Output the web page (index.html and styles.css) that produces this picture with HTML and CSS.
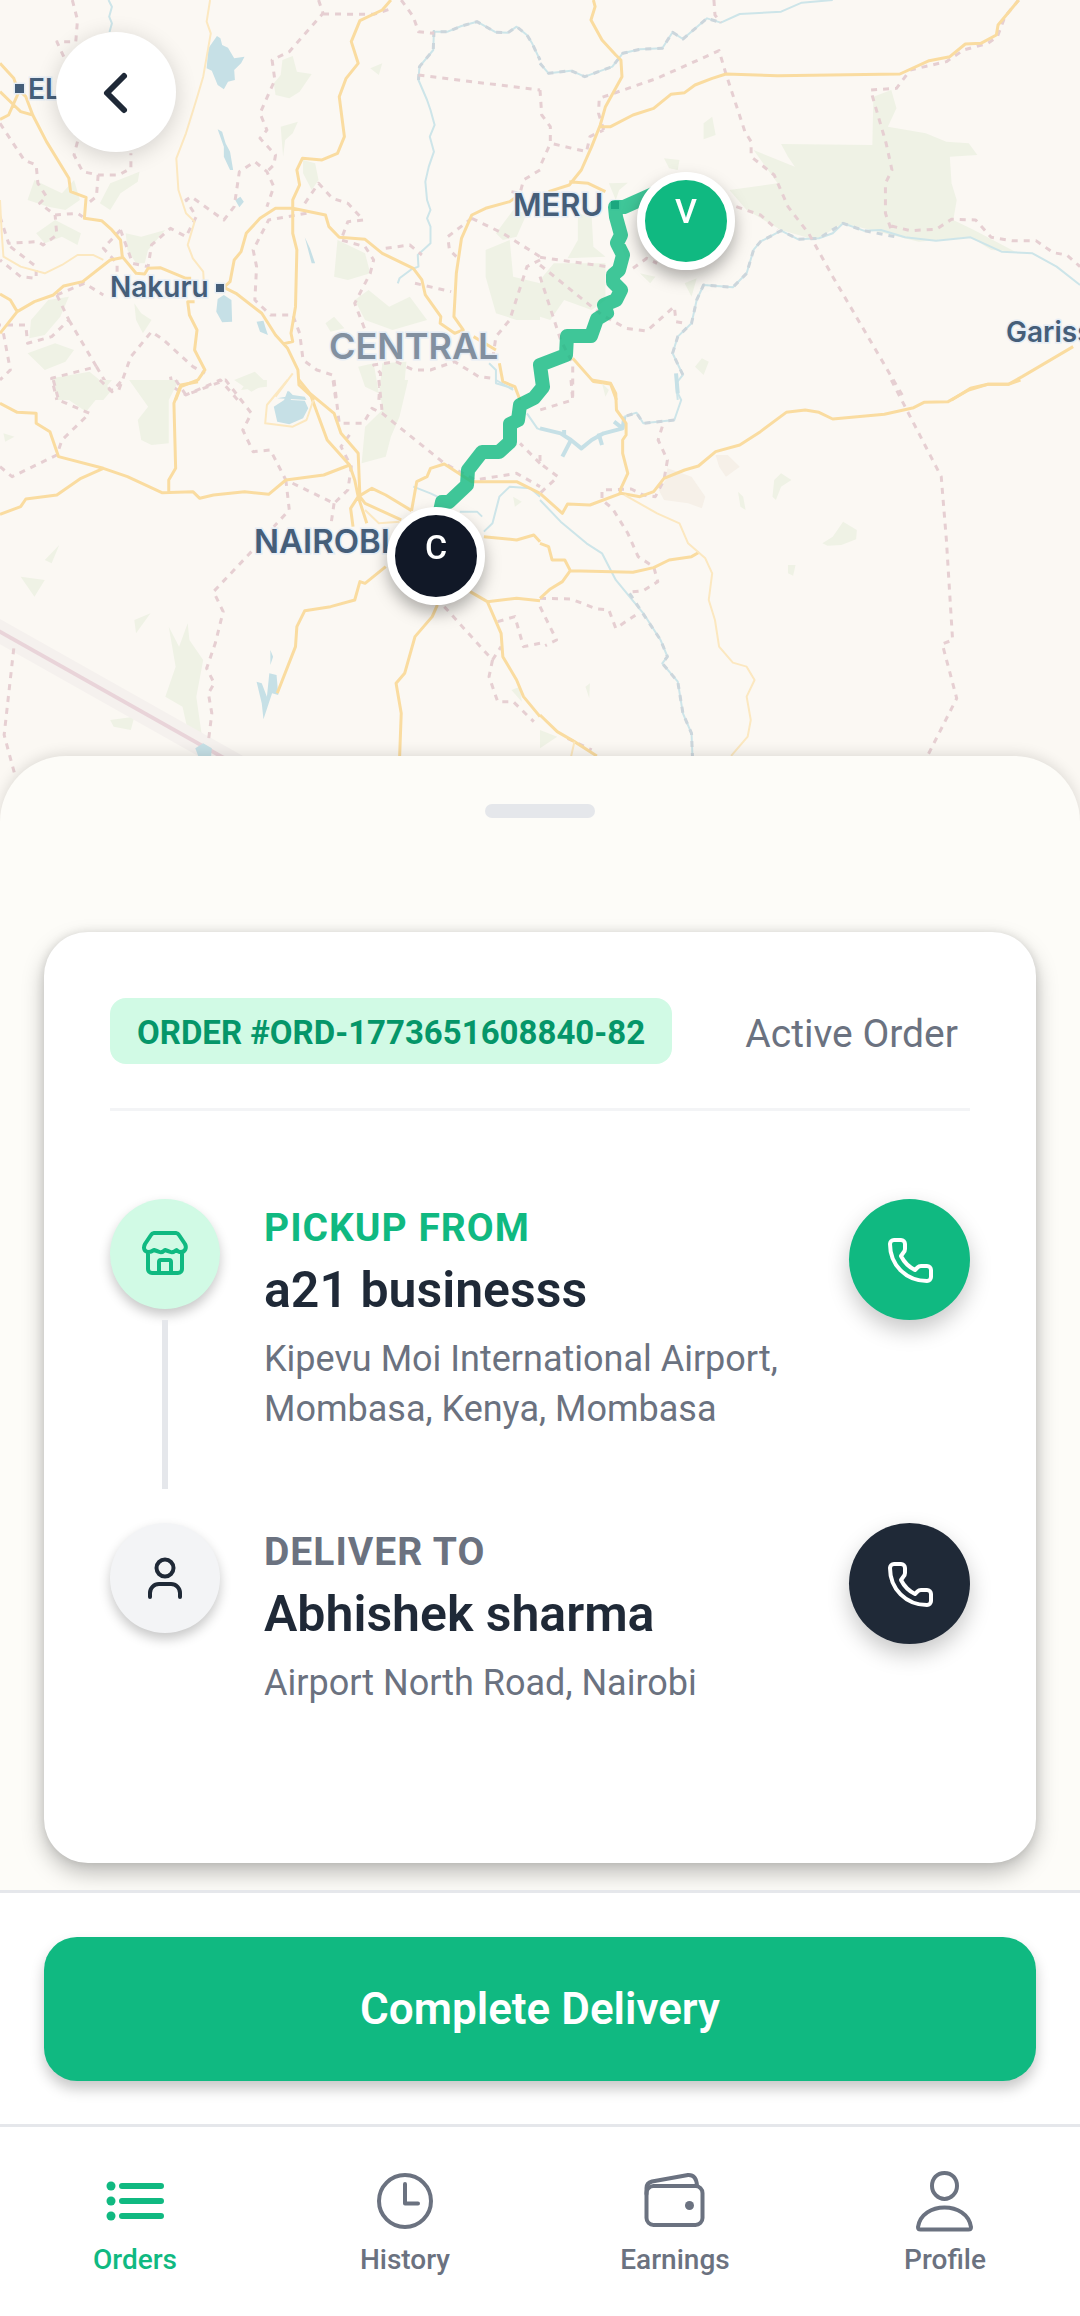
FILE: index.html
```html
<!DOCTYPE html>
<html lang="en">
<head>
<meta charset="utf-8">
<meta name="viewport" content="width=device-width, initial-scale=1">
<title>Active Order</title>
<link rel="stylesheet" href="styles.css">
</head>
<body>
<div class="screen">
  <header class="map">
    <svg class="map-canvas" viewBox="0 0 1080 822" preserveAspectRatio="xMidYMin slice" role="img" aria-label="Delivery route map">
      <!-- north-west tile -->
      <g transform="scale(.3444 .3333)">
        <path class="park" d="M820 180L850 168L862 215L905 222L870 275L840 295L800 285L795 250L815 225ZM815 380L865 365L850 400L828 420L822 470ZM80 600L100 540L140 560L180 580L215 540L232 600L190 630L140 620ZM290 610L320 550L405 515L400 545L350 580L320 630ZM365 700L410 710L480 690L430 750L420 790L395 790L370 750ZM105 700L160 660L235 700L225 735L180 710L130 730ZM140 900L200 890L175 950L130 1005L85 1015L90 960ZM80 1060L160 1030L215 1050L190 1085L130 1110ZM150 1135L260 1115L325 1170L300 1200H165ZM980 720L1060 760L1075 820L1010 840L970 830ZM1030 900L1070 870L1130 920L1190 890L1240 960L1140 990L1060 960ZM1410 750L1480 720L1490 830L1568 850V960H1500L1440 940L1410 830ZM1440 700L1490 630L1530 640L1500 710L1460 720ZM1110 1090L1180 1085L1170 1200H1100ZM680 1140L740 1115L775 1150L730 1175ZM880 480L915 490L925 540L905 570L880 520ZM1040 1100L1085 1090L1100 1180L1060 1160ZM945 970L970 950L1000 985L960 995ZM390 910L410 940L440 960L415 1000L395 960ZM1075 205L1110 190L1100 225Z"/>
        <path class="river" d="M315 0L325 20L317 50L325 70L318 96M1155 850L1160 835L1195 808L1215 800L1213 765L1250 730L1250 680L1240 655L1250 630L1240 600L1235 545L1245 500L1260 455L1248 410L1262 375L1250 330L1240 300L1215 240L1218 200L1258 150L1260 90M1260 95L1300 95L1340 78L1385 65L1440 97L1475 98L1500 80L1530 105L1545 130L1568 180M1420 1090L1440 1110L1440 1150L1490 1165"/>
        <path class="county water-edge" d="M1215 240L1218 200L1258 150L1260 95L1300 95L1340 78L1385 65L1440 97L1475 98L1500 80L1530 105L1545 130L1568 180"/>
        <path class="lake" d="M630 108L640 115L645 135L662 143L680 175L710 170L700 190L680 210L682 240L662 245L650 268L632 255L615 212L600 205L605 145ZM632 388L645 395L655 430L668 455L677 510L668 510L650 470V440ZM683 600L698 590L708 605L695 622ZM885 712L900 745L915 790L905 790ZM650 885L672 900L674 965L645 967L628 935L632 897ZM745 965L765 962L770 980L778 1005L755 995ZM805 1195L830 1190L838 1172L850 1185L885 1190L890 1200Z"/>
        <path class="county" d="M210 0L225 60L220 125H165L185 170M0 370L70 480L105 495L110 550L135 590L115 610L160 645L225 640L240 650M225 425L215 465L240 515L285 525H345L380 505V460M285 525L280 590L255 610M0 650L25 730L110 725L125 735L165 705L160 645M30 740L105 800V835L60 830L0 780M350 690L300 745L340 790V820M350 690L385 790L430 800L440 735L495 685L540 710L570 650L540 600L555 590L650 660L680 620L695 515L740 485L775 515L795 560L775 620M925 0L938 40L840 155L790 180L798 240L755 340L775 390L755 415L800 465L795 495L775 515M938 42L1085 43L1140 25M1165 0L1200 50L1215 95L1260 100M890 640L780 660L735 750L745 800L740 900L785 945L850 945L870 1000L880 1080L920 1110L965 1125L975 1200M885 610L925 550L965 595L1010 610L1055 660L1010 665L990 720L1060 740L1085 780L1075 820L1030 910L1060 990M1120 745L1190 735L1225 765M1205 850L1310 875M1215 225L1330 240L1568 270M1568 510L1520 540L1510 580L1485 575M1370 655L1300 710L1305 750L1325 770M1370 655L1460 700L1568 770M1568 780L1530 800L1480 960L1440 1010L1430 1080M165 885L200 960L150 1010L80 1030L75 975H0M200 960L280 1100L150 1135L165 1200M280 1100L320 1170H345L380 1070L440 995L475 1020L560 1100L595 1120M10 1000L30 1110L0 1140M495 1130L500 1160L540 1185L640 1140L690 1200M1100 1200L1105 1120L1085 1095L1150 1085L1200 1110H1250L1320 1085L1390 1130L1430 1135M165 885L245 850L300 885"/>
        <path class="road" d="M0 190L40 235L50 265L75 290L95 345L135 425L200 535L205 575L250 592L245 655L295 662L325 690L350 720L355 770L395 820L420 822L430 805L465 803L540 835H555M0 275L40 315L60 335L95 345M0 358L25 345L55 275M0 1000L50 935L100 905L155 885L185 858L240 845L320 780L360 772M0 882L30 900L50 935M650 862L668 845L680 780L700 755L715 700L755 655L800 625L850 625L945 645L955 680L985 712L1060 718L1110 760L1200 805L1225 840L1235 885L1280 950L1278 970L1320 1000L1345 990L1318 950L1325 820L1340 715L1370 645L1410 625L1480 605L1500 590M820 1032L850 1025L845 1000L858 920L862 750L850 700V600L870 555L862 510L878 475L935 480L980 460L1000 410L990 330L985 290L1005 235L1040 190L1020 125L1045 62L1110 30L1135 0M650 862L685 880L760 940L800 1005L835 1045L865 1110L868 1155L905 1190L912 1200M565 905H545L550 945L572 990L565 1050L595 1110L575 1140L525 1160L510 1200M1375 1010L1440 1050M1450 1090L1460 1145L1495 1160L1510 1200"/>
        <path class="road minor" d="M0 600L5 700L10 770L60 800L130 820L180 795L225 765H270L300 780M610 0L600 65L612 100L590 230L570 300L540 400L512 475L518 570L540 640L565 665L545 735L560 775L590 815L592 850M800 1190L850 1120"/>
      </g>
      <!-- north-east tile -->
      <g transform="translate(540 0) scale(.3444 .3333)">
        <path class="park" d="M700 432L965 435L968 290L1020 270L1035 325L1010 380L1120 400L1180 425L1245 430L1270 465L1190 470L1195 550L1210 600L1200 660L1260 690L1380 755L1310 750L1250 710L1100 725L1000 700L880 670L800 720L700 690L600 630L550 570L690 550L620 450L740 500L720 470ZM475 370L500 350L510 405L475 418ZM360 475L405 480L400 510L375 505ZM110 640L150 650L155 740L190 770L80 775L110 720ZM40 790H190V900L150 930L70 900L30 960L0 950V840ZM450 1100L470 1075L490 1085L475 1125ZM200 550L255 548L230 570L220 600ZM290 820L335 830L320 850ZM420 850L455 835L440 890Z"/>
        <path class="river" d="M0 190L25 220L90 212L130 230L210 200L240 160L290 148L355 145L385 97L415 117L485 55L525 68L580 42L700 35L760 8L850 0M400 1200L395 1150L415 1125L385 1060L400 1010L440 970L455 900L475 855L560 862L600 820L620 750L640 725L700 692L750 718L810 715L850 700L880 670L940 692L990 690L1060 712L1150 722L1250 712L1340 755L1430 760L1500 800L1568 855"/>
        <path class="county water-edge" d="M0 190L25 220L90 212L130 230L210 200L240 160L290 148L355 145L385 97L415 117L485 55L525 68M415 1125L385 1060L400 1010L440 970L455 900L475 855L560 862L600 820L620 750L640 725L700 692L750 718L810 715L880 670L940 692L1030 710"/>
        <path class="county" d="M505 0L508 45L525 68M1390 0L1350 50L1328 110L1300 130L1230 150L1180 185L1075 210L1035 265L960 270L1005 430L1022 510L1003 550V640L1020 690M1020 678L1075 692L1150 688L1195 658L1265 660L1310 712L1370 722H1440L1490 758L1530 765L1568 800M185 390L170 340L172 295L340 235L520 152L540 222L595 395L613 425V470L680 525L720 620L780 700L850 830L1060 1200M0 270L5 345L30 380V430L0 500M40 432L135 455L145 410L185 390M570 620L640 645L690 690M0 772L195 800M0 795L180 945L250 985L310 993L390 920L395 965L420 970M0 830L60 1020L95 1090V1200M270 805L310 775L340 790"/>
        <path class="road" d="M155 0L160 20L148 60L180 120L220 165L235 180L238 230L190 320L175 375L150 440L120 510L85 555L25 575M85 545L140 550L190 575M175 380H205L270 345L330 325L380 283L420 278L450 255L500 235L540 222L690 227L1045 222L1130 182L1190 170L1235 132L1280 130L1325 105L1330 75L1390 0M1195 1200L1250 1165L1300 1153H1360L1400 1130L1548 1040M95 1075L155 1145L205 1152L222 1200"/>
      </g>
      <!-- south-west tile -->
      <g transform="translate(0 380) scale(.3444 .3333)">
        <path class="park" d="M170 0H325L250 95L200 60ZM375 0H520L490 60V190L440 195L410 180L400 120L430 80ZM1050 250L1060 140L1110 90L1100 0H1185L1160 110L1135 170L1120 230ZM60 590L130 600L100 650ZM490 740L520 800L545 730L550 780L590 840L570 950L585 1060L545 1050L530 980L480 950L510 860ZM320 1020L390 1010L380 1050L330 1040ZM130 540L172 495L150 550ZM390 720L437 700L395 760ZM10 160L42 170L15 185ZM720 0H775V20L700 30ZM1490 350L1515 365L1495 380ZM1485 930L1510 920L1515 965Z"/>
        <path class="frontier-glow" d="M-40 732L690 1157"/>
        <path class="frontier" d="M-40 732L690 1157"/>
        <path class="river" d="M1200 320L1250 340L1270 350M1335 395L1385 395L1400 410M1405 455L1430 430L1450 350L1480 320L1540 325L1568 350M1440 0L1490 30M1530 100L1560 145L1568 148"/>
        <path class="lake" d="M795 80L825 60L835 32L845 60L885 62L895 85L880 115L840 133L805 125ZM785 810L793 830L785 855ZM782 880L803 885L808 945L790 940L765 1018L760 970L745 905L760 910L775 950ZM567 1105L590 1090L615 1105L612 1140H580Z"/>
        <path class="county" d="M0 260L35 290L165 225L180 180L260 100L170 60L155 0M290 0L325 35L355 0M510 0L540 45L655 0L730 100L705 150L735 215L785 210L830 300L970 370L1010 330L1020 260L990 200L1025 150M830 300L840 390L795 440M730 515L620 635L648 695L625 790L600 865L622 910L605 940L615 1000L605 1085M40 805L12 1065L42 1180M970 0L985 130H1055L1080 85L1110 100L1290 250L1380 300L1500 280L1568 320M1100 0L1110 100M970 370L960 440M1290 680L1430 840L1420 890L1445 965H1490L1550 1025M1430 840L1455 800M1445 725L1495 710L1520 800L1568 790M1568 250L1510 190"/>
        <path class="road" d="M0 70L50 97L105 100V130L145 155L170 230L300 265L370 290L470 338L560 335L580 355L620 345L710 335L780 343L830 300L940 285L1015 255M0 403L60 380L75 357L165 345L235 295L300 265M575 5L525 15L505 70L510 265L490 300V335M868 0L900 40L950 180L1015 255L1030 300L1040 350L1065 430M900 40L970 100L990 160L1040 220L1045 350M1040 350L1080 325L1120 345L1195 392M1045 350L1060 370L1165 420M1040 350L1018 385L1025 440M1195 392L1210 305L1240 290L1250 265L1290 252L1370 305H1500L1568 340M1120 560L1060 610L1045 605L1030 660L960 680L885 692L862 740L858 800L805 940M1270 675L1255 710L1205 770L1175 880L1150 910L1165 1000L1160 1140M1365 635L1415 665L1455 760L1460 830L1500 900L1520 950L1568 1010M1415 665L1500 655L1568 662M1405 470L1500 480L1550 465L1568 485"/>
        <path class="road minor" d="M835 0L775 75L770 130L850 140L890 120L910 60M1060 390L1100 430L1160 425"/>
      </g>
      <!-- south-east tile -->
      <g transform="translate(540 380) scale(.3444 .3333)">
        <path class="town" d="M370 265L400 275L440 290L480 350L470 385L430 370L360 360L345 330L365 300ZM510 225H545L580 260L540 290L520 260Z"/>
        <path class="park" d="M680 300L700 280L730 300L700 320L685 360L675 350ZM575 335L590 350L597 390L582 380ZM820 490L850 470L880 425L920 450L918 478L875 495L835 497ZM720 555H742L735 587L720 580ZM132 920L145 910L143 955ZM0 1050L50 1070L0 1105ZM180 10L200 30L190 50Z"/>
        <path class="river" d="M395 0L400 40L410 60L390 120L300 130L280 98L245 110M0 360L60 425L135 490L180 520L220 600L300 700L350 780L370 830L355 850L400 905L415 1000L440 1060L443 1140"/>
        <path class="river wide" d="M395 -20L400 40M245 110L240 145L185 160L150 180L120 205L90 180L60 160L0 145M90 180L65 230M240 145L215 125M70 165V150M170 160L180 195"/>
        <path class="county water-edge" d="M390 120L300 130L280 98L245 110M260 640L350 780L370 830L355 850L400 905L415 1000L440 1060L443 1140"/>
        <path class="county" d="M1020 0L1165 290L1180 480L1198 780L1168 792L1210 955L1125 1128M90 0L95 60L0 90M0 225V250L52 290L0 340M355 140L343 180L370 240L360 300L335 350L300 345L265 327L180 330V360L210 385L255 460L285 530L330 560L342 605L300 632L255 637M0 655L90 657L165 687L200 690L220 745L285 700M0 680L48 780L15 797M80 1075L150 1110"/>
        <path class="road" d="M150 0L205 10L220 40L222 90L250 130V165L240 180V220L255 280L235 325L232 340M0 340L65 400L80 372L145 375L235 340L290 350L330 335L360 295L420 270L460 258L510 215L580 195L640 155L715 97L770 90L810 97L850 117L1000 103L1085 83L1115 67L1185 65L1245 30L1300 13H1360L1395 0M0 490L25 500L35 540L72 540L88 572L270 577L330 563L375 540L440 530L462 517M88 572L65 605L30 627L0 655M0 1005L50 1055L100 1085L165 1128"/>
        <path class="road minor" d="M245 345L340 400L405 430L430 490L480 535L500 580L490 660L508 720L520 800L560 848L600 860L623 900L600 950L612 1020L603 1070L555 1128M100 1085L88 1140"/>
      </g>
      <g class="place">
        <path d="M15 84h9v9h-9zM216 284h8v8h-8zM611 201h8v8h-8z"/>
        <text x="28" y="99">ELDORET</text>
        <text x="110" y="297">Nakuru</text>
        <text class="city" x="513" y="216">MERU</text>
        <text x="1006" y="342">Garissa</text>
        <text class="capital" x="254" y="553">NAIROBI</text>
        <text class="region" x="329" y="359">CENTRAL</text>
      </g>
      <path class="route" d="M660 191L624 207L615 207L616 217L621 235L617 243L623 255L619 270L613 275V282L621 290L616 300L604 305L607 313L597 319L591 336H567L566 355L540 365L543 387L534 398L520 405L518 420L510 424V442L499 452H482L468 470L467 485L449 502H442L436 530"/>
      <g class="pin vendor">
        <circle cx="686" cy="221" r="45"/>
        <text x="686" y="223">V</text>
      </g>
      <g class="pin customer">
        <circle cx="436" cy="556" r="45"/>
        <text x="436" y="559">C</text>
      </g>
    </svg>
    <button class="back" type="button" aria-label="Back">
      <svg class="icon" viewBox="0 0 56 56"><path d="M36 12L19 29L36 46"/></svg>
    </button>
  </header>

  <main class="sheet">
    <div class="handle"></div>
    <article class="card">
      <div class="card-head">
        <span class="badge">ORDER #ORD-1773651608840-82</span>
        <span class="status">Active Order</span>
      </div>
      <section class="stop pickup">
        <div class="rail">
          <span class="disc">
            <svg class="icon" viewBox="0 0 56 56"><path d="M17 7H39a4 4 0 0 1 3 2L48 18C50 22 48 26 44 26Q41 26 39.500 24Q36 27 33.500 26T28 24Q25 27 22.500 26T17 24Q14 26 12 26C7 26 6 22 8 18L14 9a4 4 0 0 1 3-2ZM11 26V43a4 4 0 0 0 4 4H41a4 4 0 0 0 4-4V26M22 47V36a2 2 0 0 1 2-2H32a2 2 0 0 1 2 2V47"/></svg>
          </span>
          <span class="line"></span>
        </div>
        <div class="details">
          <h2 class="kind">PICKUP FROM</h2>
          <p class="name">a21 businesss</p>
          <p class="address">Kipevu Moi International Airport, Mombasa, Kenya, Mombasa</p>
        </div>
        <button class="call" type="button" aria-label="Call a21 businesss">
          <svg class="icon" viewBox="0 0 56 56"><path d="M12 8H19a4 4 0 0 1 4 4V17a5 5 0 0 1-1.500 3.500L19 24C22 30 27 35 33 38L35.500 35.500A5 5 0 0 1 39 34H45a4 4 0 0 1 4 4V45a4 4 0 0 1-4 4C24 49 8 33 8 12a4 4 0 0 1 4-4Z"/></svg>
        </button>
      </section>
      <section class="stop dropoff">
        <div class="rail">
          <span class="disc">
            <svg class="icon" viewBox="0 0 56 56"><circle cx="28" cy="18" r="8.500"/><path d="M13 47V43a9 9 0 0 1 9-9H34a9 9 0 0 1 9 9V47"/></svg>
          </span>
        </div>
        <div class="details">
          <h2 class="kind">DELIVER TO</h2>
          <p class="name">Abhishek sharma</p>
          <p class="address">Airport North Road, Nairobi</p>
        </div>
        <button class="call" type="button" aria-label="Call Abhishek sharma">
          <svg class="icon" viewBox="0 0 56 56"><path d="M12 8H19a4 4 0 0 1 4 4V17a5 5 0 0 1-1.500 3.500L19 24C22 30 27 35 33 38L35.500 35.500A5 5 0 0 1 39 34H45a4 4 0 0 1 4 4V45a4 4 0 0 1-4 4C24 49 8 33 8 12a4 4 0 0 1 4-4Z"/></svg>
        </button>
      </section>
    </article>
  </main>

  <div class="actions">
    <button class="complete" type="button">Complete Delivery</button>
  </div>

  <nav class="tabs">
    <a class="tab active" href="#orders">
      <svg class="tab-icon" viewBox="0 0 66 66"><path class="bars" d="M20 18H59M20 33H59M20 48H59"/><g class="dots"><circle cx="9" cy="18" r="4.500"/><circle cx="9" cy="33" r="4.500"/><circle cx="9" cy="48" r="4.500"/></g></svg>
      Orders
    </a>
    <a class="tab" href="#history">
      <svg class="tab-icon" viewBox="0 0 66 66"><circle cx="33" cy="33" r="26"/><path d="M33 16V35.500H46"/></svg>
      History
    </a>
    <a class="tab" href="#earnings">
      <svg class="tab-icon" viewBox="0 0 66 66"><rect x="4.500" y="18" width="56" height="39" rx="7"/><path d="M4.500 26V20Q4.500 15 10 13.500L46 7Q54.500 6.500 55 18"/><g class="dots"><circle cx="47.500" cy="37.500" r="4.500"/></g></svg>
      Earnings
    </a>
    <a class="tab" href="#profile">
      <svg class="tab-icon" viewBox="0 0 66 66"><path d="M32.500 5C40 5 45 10.500 45 18C45 25 39 31 32.500 31S20 25 20 18C20 10.500 25 5 32.500 5ZM6 59C8 46 20 39.500 32.500 39.500S57 46 59 59Q59 61.500 56.500 61.500H8.500Q6 61.500 6 59Z"/></svg>
      Profile
    </a>
  </nav>
</div>
</body>
</html>
```
FILE: styles.css
```css
* {
  box-sizing: border-box;
}

body {
  margin: 0;
  background: #fdfcf8;
  color: #1f2937;
  font-family: Roboto, "Liberation Sans", sans-serif;
}

button {
  padding: 0;
  border: 0;
  font: inherit;
  cursor: pointer;
}

h2,
p {
  margin: 0;
}

.screen {
  display: flex;
  flex-direction: column;
  min-height: 100vh;
}

/* Map */

.map {
  position: relative;
  flex: 1 0 600px;
  overflow: hidden;
  background: #fbf8f3;
}

.map-canvas {
  position: absolute;
  inset: 0;
  width: 100%;
  height: 100%;
}

.map-canvas path {
  fill: none;
  stroke-linejoin: round;
  vector-effect: non-scaling-stroke;
}

.map-canvas .park {
  fill: #eff2e5;
}

.map-canvas .town {
  fill: #f6f0e8;
}

.map-canvas .lake {
  fill: #c6e0e6;
}

.map-canvas .river {
  stroke: #cde5e9;
  stroke-width: 2px;
}

.map-canvas .wide {
  stroke: #c6e0e6;
  stroke-width: 4px;
}

.map-canvas .county {
  stroke: #e6cfd2;
  stroke-width: 3px;
  stroke-dasharray: 6 6;
}

.map-canvas .water-edge {
  stroke: #ccd6dc;
}

.map-canvas .frontier-glow {
  stroke: #f5f1ee;
  stroke-width: 22px;
}

.map-canvas .frontier {
  stroke: #e9d4d9;
  stroke-width: 4px;
}

.map-canvas .road {
  stroke: #fadca0;
  stroke-width: 3px;
}

.map-canvas .minor {
  stroke: #fce8c0;
  stroke-width: 2px;
}

.map-canvas .route {
  stroke: rgba(16, 185, 129, 0.8);
  stroke-width: 14px;
  stroke-linecap: round;
}

.place {
  fill: #455e79;
  stroke: #e6edf5;
  stroke-width: 3px;
  paint-order: stroke;
  font-family: Inter, "Liberation Sans", sans-serif;
  font-size: 28px;
  font-weight: 600;
}

.map-canvas .place path {
  fill: #455e79;
}

.city {
  font-size: 31px;
}

.capital {
  font-size: 33px;
}

.region {
  fill: #8290a0;
  font-size: 36px;
}

.pin {
  filter: drop-shadow(0 8px 8px rgba(0, 0, 0, 0.3));
}

.pin circle {
  stroke: #fff;
  stroke-width: 8px;
}

.pin text {
  fill: #fff;
  font-size: 34px;
  font-weight: 500;
  text-anchor: middle;
}

.vendor circle {
  fill: #10b981;
}

.customer circle {
  fill: #111827;
}

.icon {
  width: 56px;
  height: 56px;
  fill: none;
  stroke: currentColor;
  stroke-width: 4px;
  stroke-linecap: round;
  stroke-linejoin: round;
}

.back {
  position: absolute;
  top: 32px;
  left: 56px;
  display: grid;
  place-items: center;
  width: 120px;
  height: 120px;
  border-radius: 50%;
  background: #fff;
  color: #1f2937;
  box-shadow: 0 4px 22px rgba(0, 0, 0, 0.16);
}

.back .icon {
  stroke-width: 6px;
}

/* Order sheet */

.sheet {
  position: relative;
  margin-top: -66px;
  padding: 48px 44px 27px;
  border-radius: 66px 66px 0 0;
  background: #fdfcf8;
  box-shadow: 0 -2px 14px rgba(0, 0, 0, 0.12);
}

.handle {
  width: 110px;
  height: 14px;
  margin: 0 auto 114px;
  border-radius: 7px;
  background: #e5e7eb;
}

.card {
  padding: 66px;
  border-radius: 44px;
  background: #fff;
  box-shadow: 0 10px 22px rgba(0, 0, 0, 0.26), 0 0 10px rgba(0, 0, 0, 0.1);
}

.card-head {
  display: flex;
  align-items: center;
  justify-content: space-between;
  gap: 16px;
  margin-bottom: 88px;
  padding-bottom: 44px;
  border-bottom: 3px solid #f3f4f6;
}

.badge {
  padding: 3px 27px 0;
  border-radius: 16px;
  background: #d1fae5;
  color: #059669;
  font-size: 33px;
  font-weight: 700;
  line-height: 63px;
}

.status {
  margin-right: 12px;
  padding-top: 6px;
  color: #6b7280;
  font-size: 39px;
}

.stop {
  display: flex;
  align-items: flex-start;
  margin-bottom: 34px;
}

.rail {
  display: flex;
  flex: none;
  flex-direction: column;
  align-items: center;
  align-self: stretch;
  margin-right: 44px;
}

.disc {
  display: grid;
  place-items: center;
  width: 110px;
  height: 110px;
  border-radius: 50%;
  background: #f3f4f6;
  color: #1f2937;
  box-shadow: 0 6px 12px rgba(0, 0, 0, 0.22);
}

.pickup .disc {
  background: #d1fae5;
  color: #10b981;
}

.line {
  flex: 1;
  width: 6px;
  margin-top: 11px;
  background: #e5e7eb;
}

.details {
  flex: 1;
  min-width: 0;
  padding: 7px 33px 55px 0;
}

.kind {
  color: #6b7280;
  font-size: 39px;
  font-weight: 700;
  letter-spacing: 1px;
  line-height: 44px;
}

.pickup .kind {
  color: #10b981;
}

.name {
  margin: 10px 0 14px;
  font-size: 50px;
  font-weight: 600;
  line-height: 60px;
}

.address {
  color: #6b7280;
  font-size: 36px;
  line-height: 50px;
}

.call {
  display: grid;
  flex: none;
  place-items: center;
  width: 121px;
  height: 121px;
  border-radius: 50%;
  background: #1f2937;
  color: #fff;
  box-shadow: 0 10px 22px rgba(0, 0, 0, 0.22);
}

.pickup .call {
  background: #10b981;
}

/* Primary action */

.actions {
  position: relative;
  padding: 44px 44px 43px;
  border-top: 3px solid #e5e7eb;
  background: #fff;
}

.complete {
  display: block;
  width: 100%;
  height: 144px;
  border-radius: 33px;
  background: #10b981;
  color: #fff;
  font-size: 44px;
  font-weight: 600;
  box-shadow: 0 8px 14px rgba(0, 0, 0, 0.22);
}

/* Bottom tabs */

.tabs {
  display: grid;
  grid-template-columns: repeat(4, 1fr);
  padding: 41px 0 40px;
  border-top: 3px solid #e5e7eb;
  background: #fff;
}

.tab {
  display: flex;
  flex-direction: column;
  align-items: center;
  gap: 10px;
  color: #6b7280;
  font-size: 28px;
  font-weight: 500;
  line-height: 32px;
  text-decoration: none;
}

.tab.active {
  color: #10b981;
}

.tab-icon {
  width: 66px;
  height: 66px;
  fill: none;
  stroke: currentColor;
  stroke-width: 4px;
  stroke-linecap: round;
  stroke-linejoin: round;
}

.tab-icon .bars {
  stroke-width: 6px;
}

.tab-icon .dots {
  fill: currentColor;
  stroke: none;
}
```
